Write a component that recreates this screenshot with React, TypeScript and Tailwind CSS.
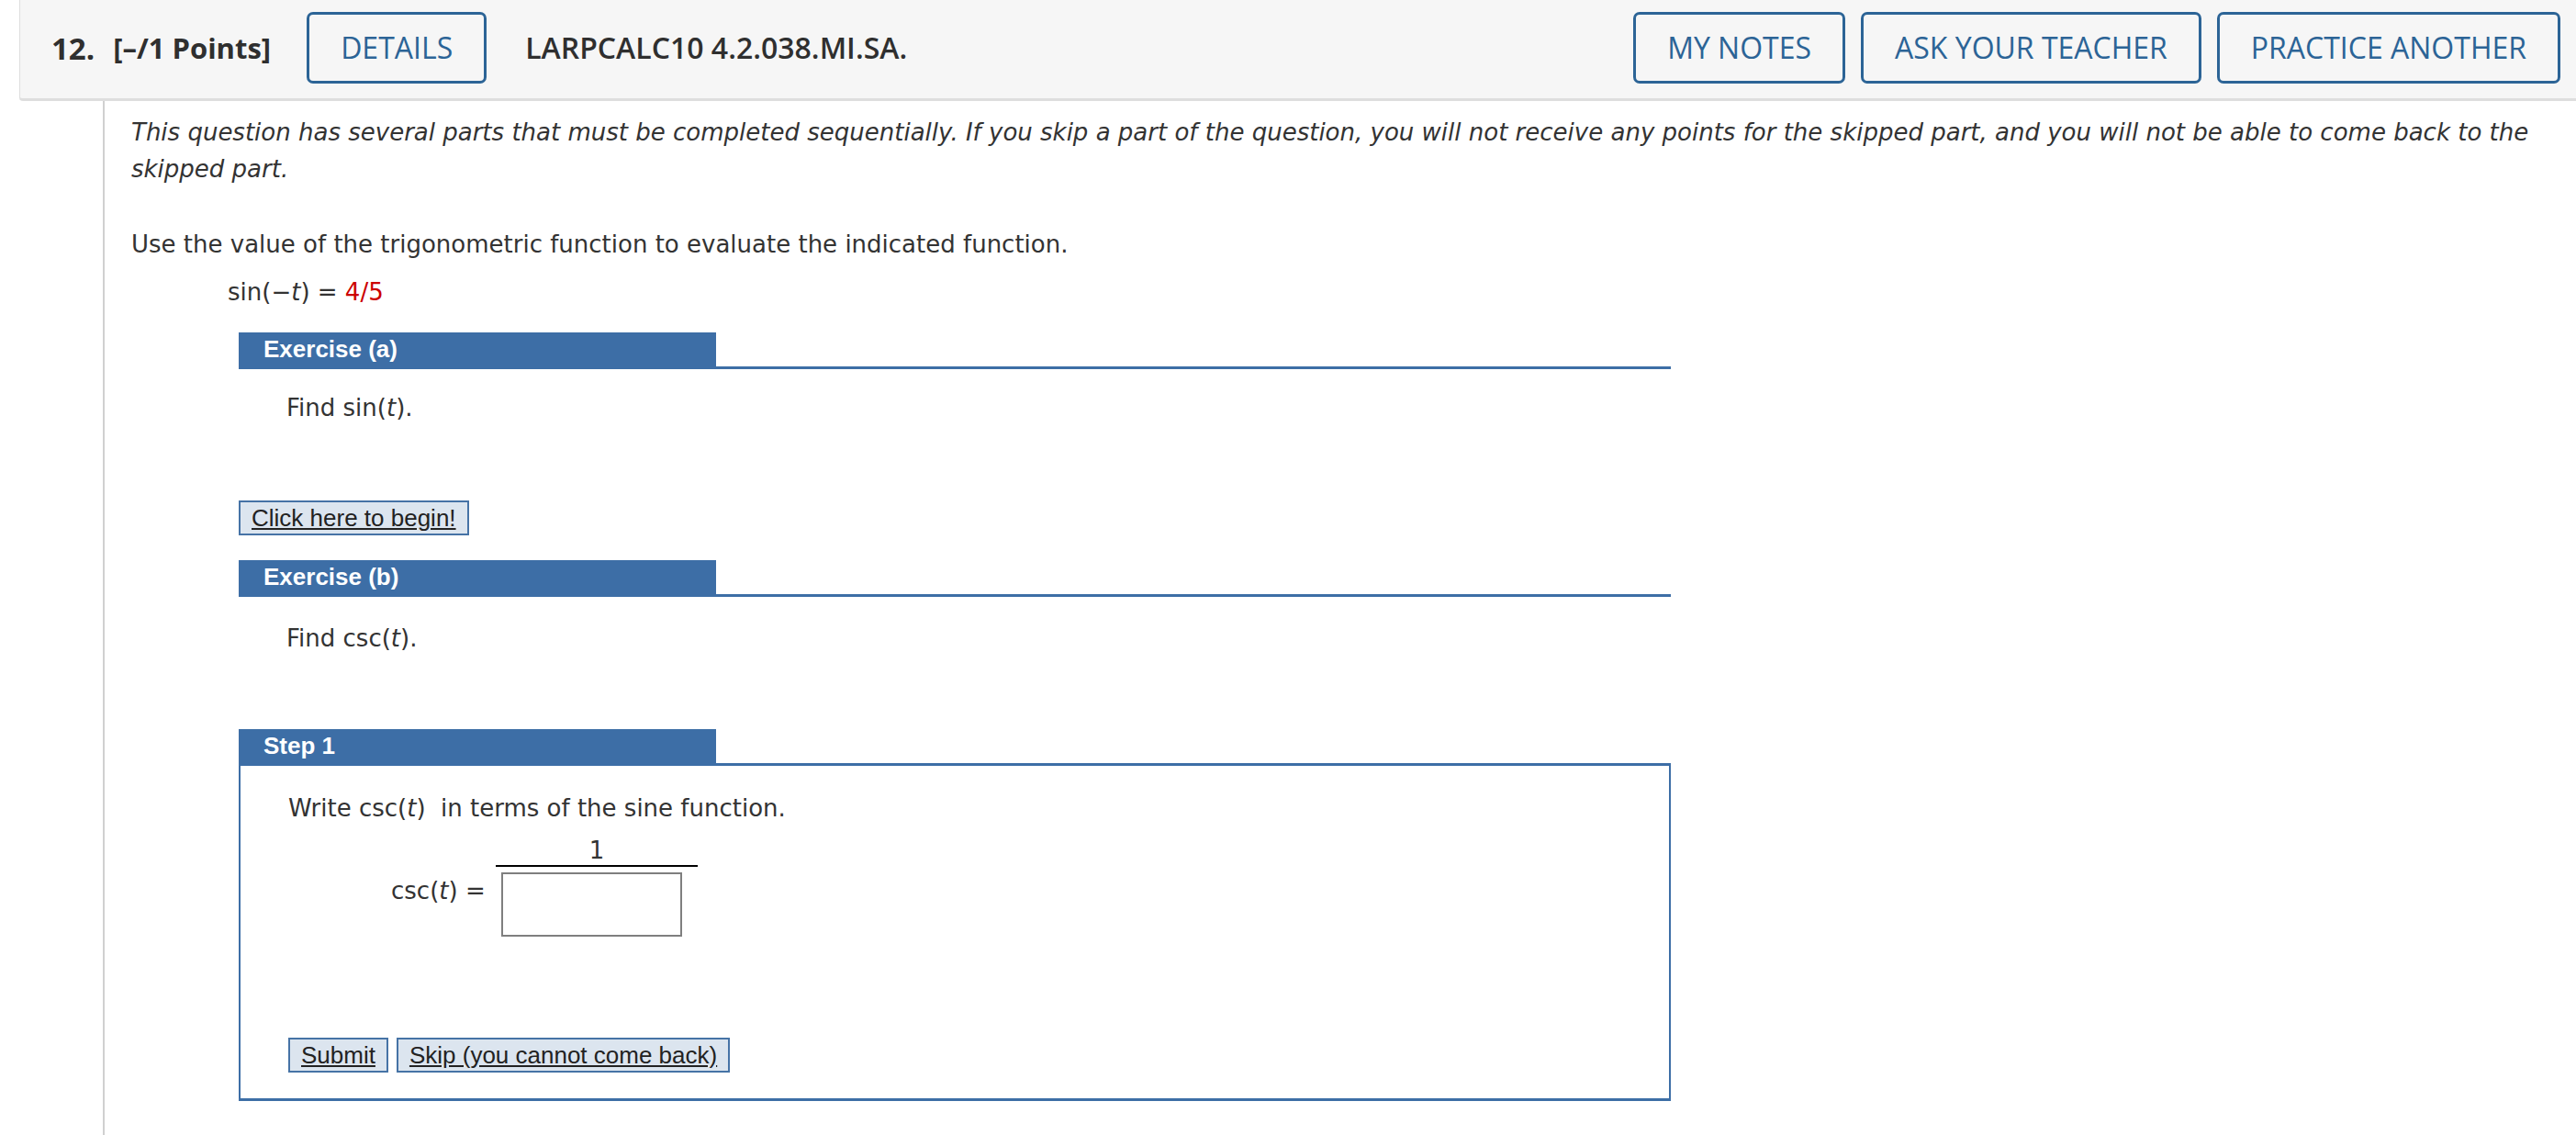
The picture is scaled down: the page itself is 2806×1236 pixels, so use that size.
import React from "react";

function HBtn({ children, className = "" }: { children: React.ReactNode; className?: string }) {
  return (
    <button
      className={
        "h-[78px] px-[34px] border-[3px] border-[#2c6496] rounded-[7px] text-[#2c6496] text-[32px] leading-none font-['Open_Sans',sans-serif] whitespace-nowrap bg-transparent " +
        className
      }
    >
      {children}
    </button>
  );
}

function Btn({ children }: { children: React.ReactNode }) {
  return (
    <button className="h-[38px] px-[12px] border-2 border-[#4673a6] bg-[#dce5ef] text-[26px] leading-[34px] text-[#222] underline font-['Liberation_Sans',Arial,sans-serif] whitespace-nowrap">
      {children}
    </button>
  );
}

function SectionBar({ label }: { label: string }) {
  return (
    <div className="w-[1560px] border-b-[3px] border-[#3d6ea6]">
      <div className="w-[520px] h-[37px] bg-[#3d6ea6] pl-[27px] text-white font-bold text-[26px] leading-[37px] font-['Liberation_Sans',Arial,sans-serif]">
        {label}
      </div>
    </div>
  );
}

export default function App() {
  return (
    <div className="min-h-[1236px] w-full bg-white text-[#333] font-['DejaVu_Sans',Verdana,sans-serif] text-[26px] leading-[40px]">
      <header className="ml-[21px] h-[110px] pb-[3px] bg-[#f6f6f6] border-l border-b-[3px] border-[#dedede] rounded-bl-[4px] flex items-center pl-[34px] pr-[17px] font-['Open_Sans',sans-serif] text-[#2f2f2f]">
        <span className="text-[33px] font-bold leading-none">12.</span>
        <span className="ml-[20px] text-[31px] font-bold leading-none">[–/1 Points]</span>
        <HBtn className="ml-[39px]">DETAILS</HBtn>
        <span className="ml-[42px] text-[32px] font-semibold leading-none">LARPCALC10 4.2.038.MI.SA.</span>
        <div className="ml-auto flex gap-[17px]">
          <HBtn>MY NOTES</HBtn>
          <HBtn>ASK YOUR TEACHER</HBtn>
          <HBtn>PRACTICE ANOTHER</HBtn>
        </div>
      </header>

      <div className="pl-[112px]">
        <div className="border-l-2 border-[#d0d0d0] min-h-[1126px] pl-[29px] pt-[14px] pr-[16px]">
          <p className="italic">
            This question has several parts that must be completed sequentially. If you skip a part of the question, you will not receive any points for the skipped part, and you will not be able to come back to the skipped part.
          </p>
          <p className="mt-[42px]">Use the value of the trigonometric function to evaluate the indicated function.</p>
          <p className="mt-[12px] pl-[105px]">
            sin(−<i>t</i>) = <span className="text-[#cc0000]">4/5</span>
          </p>

          <div className="mt-[24px] ml-[117px]">
            <SectionBar label="Exercise (a)" />
            <p className="mt-[22px] pl-[52px]">
              Find sin(<i>t</i>).
            </p>
            <div className="mt-[80px]">
              <Btn>Click here to begin!</Btn>
            </div>

            <div className="mt-[26px]">
              <SectionBar label="Exercise (b)" />
            </div>
            <p className="mt-[25px] pl-[52px]">
              Find csc(<i>t</i>).
            </p>

            <div className="mt-[79px]">
              <SectionBar label="Step 1" />
            </div>
            <div className="w-[1560px] border-x-2 border-b-[3px] border-[#3d6ea6] pl-[52px] pt-[26px] pb-[28px]">
              <p>
                Write csc(<i>t</i>)&nbsp; in terms of the sine function.
              </p>
              <div className="flex items-end ml-[112px] mt-[10px]">
                <span className="mb-[30px] w-[114px] whitespace-nowrap">
                  csc(<i>t</i>) =
                </span>
                <div className="flex flex-col">
                  <div className="text-center leading-[32px]">1</div>
                  <div className="w-[220px] h-[2px] bg-black" />
                  <div className="ml-[6px] mt-[6px] w-[197px] h-[70px] border-2 border-[#7f7f7f] bg-white" />
                </div>
              </div>
              <div className="mt-[110px] flex gap-[9px]">
                <Btn>Submit</Btn>
                <Btn>Skip (you cannot come back)</Btn>
              </div>
            </div>
          </div>
        </div>
      </div>
    </div>
  );
}
